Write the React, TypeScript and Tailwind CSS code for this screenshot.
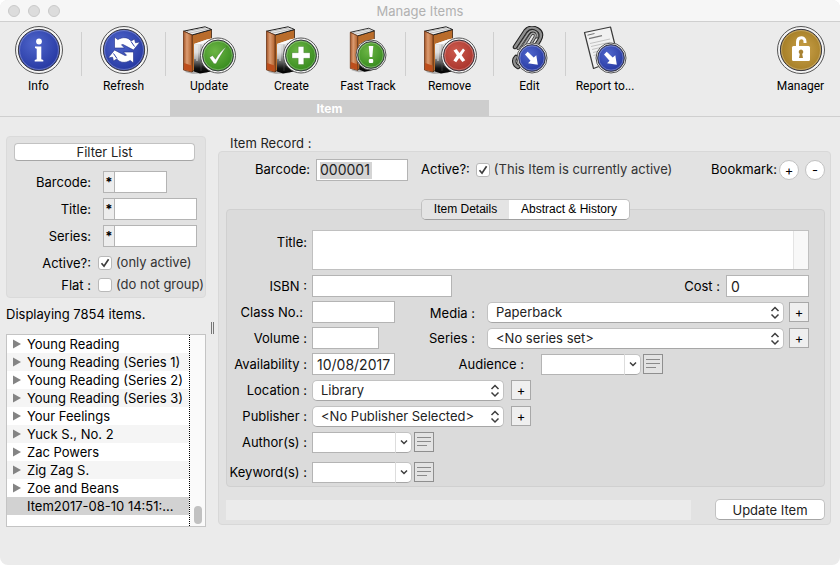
import React, { useState } from "react";

const field = "h-[22px] border border-[#b4b4b4] bg-white px-1 text-sm text-[#222] outline-none";
const label = "shrink-0 text-right text-[13px] whitespace-nowrap";

function Rings({ cx, cy, r, fill }: { cx: number; cy: number; r: number; fill: string }) {
  return (
    <>
      <circle cx={cx} cy={cy} r={r - 0.5} fill="#f4f4f4" stroke="#555" strokeWidth="1" />
      <circle cx={cx} cy={cy} r={r * 0.86} fill={`url(#${fill})`} stroke="#3a3a44" strokeWidth="1" />
      <circle cx={cx} cy={cy} r={r * 0.86 - 1.2} fill="none" stroke="#fff" strokeOpacity=".28" strokeWidth="1" />
    </>
  );
}

function Gradients() {
  return (
    <svg width="0" height="0" className="absolute" aria-hidden="true">
      <defs>
        <radialGradient id="blue" cx=".4" cy=".35" r=".7">
          <stop offset="0" stopColor="#4f66cb" />
          <stop offset="1" stopColor="#2436a0" />
        </radialGradient>
        <radialGradient id="green" cx=".4" cy=".35" r=".7">
          <stop offset="0" stopColor="#6cb545" />
          <stop offset="1" stopColor="#34891c" />
        </radialGradient>
        <radialGradient id="red" cx=".4" cy=".35" r=".7">
          <stop offset="0" stopColor="#cb5a4e" />
          <stop offset="1" stopColor="#a8322a" />
        </radialGradient>
        <radialGradient id="gold" cx=".55" cy=".5" r=".6">
          <stop offset="0" stopColor="#c9a14a" />
          <stop offset="1" stopColor="#a17a22" />
        </radialGradient>
        <linearGradient id="spine" x1="0" x2="1" y1="0" y2="0">
          <stop offset="0" stopColor="#a35426" />
          <stop offset=".4" stopColor="#dc9c72" />
          <stop offset="1" stopColor="#b0602a" />
        </linearGradient>
        <linearGradient id="pages" x1="0" x2="0" y1="0" y2="1">
          <stop offset="0" stopColor="#f0f0f0" />
          <stop offset=".4" stopColor="#cfcfcf" />
          <stop offset=".65" stopColor="#6c6c6c" />
          <stop offset=".85" stopColor="#141414" />
          <stop offset="1" stopColor="#000" />
        </linearGradient>
      </defs>
    </svg>
  );
}

function Books() {
  return (
    <g strokeLinejoin="round">
      <path d="M3 46l8 2 14-1 6-8V14z" fill="#000" opacity=".25" />
      <path d="M10 9l19.500-5.500V30L10 46z" fill="#b96c2b" stroke="#3a2110" strokeWidth=".8" />
      <path d="M1.500 5.200L23 .8l6.500 2.700L10 9z" fill="#efefef" stroke="#1d1d1d" strokeWidth="1" />
      <path d="M4 5.800l20-4M7 7.200L27 2.800" stroke="#a9a9a9" strokeWidth=".7" />
      <path d="M1.500 5.200L10 9v37l-8.500-2z" fill="url(#spine)" stroke="#6b3517" strokeWidth=".8" />
      <path d="M2 37l7.500 2.500v6L2 43.500z" fill="#bd4e1c" />
      <path d="M12 18l13-4.500 7-1.500v33l-14 2.500-6-2z" fill="url(#pages)" />
      <path d="M12 18l13-4.500 7-1.500-12 6z" fill="#fafafa" />
      <path d="M13 19v14M15 19v16" stroke="#f8f8f8" strokeOpacity=".8" strokeWidth="1" />
      <path d="M19 18.500V45M23 17v10" stroke="#6a6a6a" strokeOpacity=".5" strokeWidth=".8" />
    </g>
  );
}

function BookIcon({ kind }: { kind: "check" | "plus" | "cross" }) {
  return (
    <svg width="54" height="48" viewBox="0 0 54 48" aria-hidden="true">
      <Books />
      <Rings cx={36} cy={29.5} r={18} fill={kind === "cross" ? "red" : "green"} />
      {kind === "check" && (
        <path d="M27.500 31.500l3-2 3 3.800C36.500 28 40 24 44.500 20.800c-4 5-7 10.500-10.500 17l-2-.1z" fill="#fff" stroke="#245f12" strokeOpacity=".5" strokeWidth=".6" />
      )}
      {kind === "plus" && (
        <path d="M33.200 20.500h5.600v6.200H45v5.600h-6.200v6.200h-5.600v-6.200H27v-5.600h6.200z" fill="#fff" stroke="#245f12" strokeOpacity=".5" strokeWidth=".6" />
      )}
      {kind === "cross" && (
        <path d="M30.500 24.500l3-1.500 3 4 3.500-4.500 2 1.800-3.300 5 3.500 5-2.800 1.700-3.200-4-3 4.200-2.800-1.700 3.400-5.200z" fill="#fff" />
      )}
    </svg>
  );
}

function ArrowBadge({ cx, cy }: { cx: number; cy: number }) {
  return (
    <>
      <Rings cx={cx} cy={cy} r={15.5} fill="blue" />
      <path
        transform={`translate(${cx} ${cy})`}
        d="M-7-3.500L-4.300-6.200 1.700-.5 4.300-2.800 5.800 6.800-4 5.300-1.500 2.700z"
        fill="#fff"
      />
    </>
  );
}

const clip = "M3 21L13.500 5C17 .8 22 1.200 25.500 3.500s4.500 6 2 10.500L18 29M4 31c-3 3-2 8 2 10";
const innerClip = "M9 24L18.500 9c2-3 6-2 4.500 2L14 26M6 22.500L16 7.500c3-4.500 11-3 9 3.500";

const refreshArrow = "M14.500 11l3.300 2.600c5-3 10.200-2.500 13.400 1.400l3.300-2 1 3.800 4.500-.8-6.500 8-9-4.700c-1-.8-2-1-3-.5l3 3.200h-10z";

const icons: Record<string, React.ReactNode> = {
  Info: (
    <svg width="48" height="48" viewBox="0 0 48 48" aria-hidden="true">
      <Rings cx={24} cy={24} r={24} fill="blue" />
      <circle cx="24" cy="15.500" r="2.900" fill="#fff" />
      <path d="M20 20.500h6.300v12.700l2 .8v1.600h-8.600V34l2-.8V22.800l-1.700-.7z" fill="#fff" />
    </svg>
  ),
  Refresh: (
    <svg width="48" height="48" viewBox="0 0 48 48" aria-hidden="true">
      <Rings cx={24} cy={24} r={24} fill="blue" />
      <g fill="#fff" stroke="#1c2b86" strokeWidth=".6">
        <path d={refreshArrow} />
        <path d={refreshArrow} transform="rotate(180 24 24)" />
      </g>
      <path d="M31 15.500l3.500 5M17 32.500l-3.500-5" stroke="#2d40a8" strokeWidth="1" />
    </svg>
  ),
  Update: <BookIcon kind="check" />,
  Create: <BookIcon kind="plus" />,
  "Fast Track": (
    <svg width="38" height="48" viewBox="0 0 38 48" aria-hidden="true">
      <g transform="translate(0 1.500) scale(.86 .93)">
        <Books />
      </g>
      <Rings cx={22} cy={29} r={15.5} fill="green" />
      <path d="M19.700 20h4.600l-1 11h-2.600z" fill="#fff" />
      <rect x="19.800" y="33" width="4.400" height="4" rx="1" fill="#fff" />
    </svg>
  ),
  Remove: <BookIcon kind="cross" />,
  Edit: (
    <svg width="36" height="48" viewBox="0 0 36 48" aria-hidden="true">
      <g fill="none" strokeLinecap="round">
        <path d={clip} stroke="#1f1f1f" strokeWidth="4.500" />
        <path d={innerClip} stroke="#2b2b2b" strokeWidth="3" />
        <path d={clip} stroke="#8f8f8f" strokeWidth="2.400" />
        <path d={innerClip} stroke="#a5a5a5" strokeWidth="1.500" />
      </g>
      <ArrowBadge cx={20} cy={32} />
    </svg>
  ),
  "Report to...": (
    <svg width="44" height="48" viewBox="0 0 44 48" aria-hidden="true">
      <path d="M1.500 6.500L27.500 1l8 32L10.500 42.500z" fill="#f1f1f1" stroke="#3a3a3a" strokeWidth="1.200" strokeLinejoin="round" />
      <path d="M4.500 9.200l7-1.700" stroke="#777" strokeWidth="1" />
      <path d="M6 12.700l13-3" stroke="#777" strokeWidth="1.200" />
      <path d="M7 17.500l20-4.500M8 20.500l19-4.300M9 23.500l14-3.300M10 26.500l8-2M10.500 29.500l5-1.300" stroke="#bcbcbc" strokeWidth=".9" />
      <ArrowBadge cx={28} cy={32} />
    </svg>
  ),
  Manager: (
    <svg width="48" height="48" viewBox="0 0 48 48" aria-hidden="true">
      <Rings cx={24} cy={24} r={24} fill="gold" />
      <path d="M20.500 21v-5c0-5.500 7.500-5.500 7.500-.5V17" fill="none" stroke="#fff" strokeWidth="3" />
      <rect x="15" y="20" width="18" height="15" rx="1.500" fill="#fff" />
      <path d="M24 23.500a2.400 2.400 0 0 1 1.200 4.400l.8 4.100h-4l.8-4.100a2.400 2.400 0 0 1 1.200-4.400z" fill="#a88233" />
    </svg>
  ),
};

function Tool({ name, width }: { name: string; width: string }) {
  return (
    <button className={`flex shrink-0 flex-col items-center gap-1 pt-1 ${width}`}>
      {icons[name]}
      <span className="text-xs leading-4 whitespace-nowrap">{name}</span>
    </button>
  );
}

function Separator() {
  return <div className="mx-1 mt-2.5 h-11 w-px shrink-0 bg-[#cfcfcf]" />;
}

function Check({ id, defaultChecked = false }: { id: string; defaultChecked?: boolean }) {
  return (
    <span className="relative flex h-3.5 w-3.5 shrink-0">
      <input
        id={id}
        type="checkbox"
        defaultChecked={defaultChecked}
        className="peer h-3.5 w-3.5 appearance-none rounded-[3px] border border-[#b9b9b9] bg-white"
      />
      <svg viewBox="0 0 14 14" className="pointer-events-none absolute inset-0 hidden peer-checked:block" aria-hidden="true">
        <path d="M3.500 7.300L6 10.200l4.600-7" fill="none" stroke="#3c3c3c" strokeWidth="1.700" />
      </svg>
    </span>
  );
}

function FilterField({ name, width }: { name: string; width: string }) {
  const id = `filter-${name}`;
  return (
    <div className="flex h-[22px] items-center">
      <label htmlFor={id} className={`${label} mr-3 w-[84px] pt-0.5`}>{name}:</label>
      <button className="h-full w-3 shrink-0 border border-[#b4b4b4] bg-[#ededed] text-[13px] leading-5 font-bold" aria-label={`${name} wildcard`}>*</button>
      <input id={id} className={`${field} -ml-px ${width}`} />
    </div>
  );
}

function Pop({ id, value, width }: { id: string; value: string; width: string }) {
  return (
    <span className={`relative flex h-[21px] ${width}`}>
      <select id={id} className="h-full w-full appearance-none rounded-[5px] border border-[#c2c2c2] border-b-[#a6a6a6] bg-white pl-2 text-[13px] text-[#222]">
        <option>{value}</option>
      </select>
      <svg width="10" height="14" viewBox="0 0 10 14" className="pointer-events-none absolute top-1 right-1" aria-hidden="true">
        <path d="M1.500 5L5 1.500 8.500 5M1.500 8.500L5 12l3.500-3.500" fill="none" stroke="#3d3d3d" strokeWidth="1.500" />
      </svg>
    </span>
  );
}

function Plus({ name }: { name: string }) {
  return (
    <button aria-label={name} className="h-5 w-5 shrink-0 border border-[#a8a8a8] bg-[#efefef] text-[13px] leading-4">
      +
    </button>
  );
}

function Combo({ id }: { id: string }) {
  return (
    <span className="flex items-center">
      <input id={id} className="h-[21px] w-[83px] border border-r-0 border-[#b4b4b4] bg-white px-1 text-[13px] outline-none" />
      <button aria-label="Show choices" className="flex h-[21px] w-[17px] items-center justify-center rounded-r-[5px] border border-[#c2c2c2] border-b-[#a6a6a6] border-l-[#ddd] bg-white">
        <svg width="8" height="6" viewBox="0 0 8 6" aria-hidden="true">
          <path d="M1 1.500l3 3 3-3" fill="none" stroke="#3d3d3d" strokeWidth="1.500" />
        </svg>
      </button>
      <button aria-label="Open list" className="ml-0.5 h-5 w-5 border border-[#8f8f8f] bg-[#e3e3e3]">
        <svg width="18" height="18" viewBox="0 0 18 18" aria-hidden="true">
          <path d="M2 4.500h14M2 8.500h14M2 12.500h10" stroke="#8a8a8a" strokeWidth="1" />
        </svg>
      </button>
    </span>
  );
}

function Row({ name, id, tight = false, children }: { name: string; id: string; tight?: boolean; children: React.ReactNode }) {
  return (
    <div className="flex h-[26px] items-center">
      <label htmlFor={id} className={`${label} mr-[5px] w-[80px] pt-0.5 ${tight ? "pr-1" : ""}`}>{name}</label>
      {children}
    </div>
  );
}

const titles = [
  "Young Reading",
  "Young Reading (Series 1)",
  "Young Reading (Series 2)",
  "Young Reading (Series 3)",
  "Your Feelings",
  "Yuck S., No. 2",
  "Zac Powers",
  "Zig Zag S.",
  "Zoe and Beans",
];

function Sidebar() {
  return (
    <aside className="w-[200px] shrink-0 pt-[19px]">
      <div className="rounded border border-[#dadada] bg-[#e2e2e2] pt-1.5 pr-[10px] pb-px pl-[7px]">
        <button className="block h-[18px] w-full rounded border border-[#c2c2c2] border-b-[#a6a6a6] bg-white text-[13px] leading-4 text-[#222]">
          Filter List
        </button>
        <div className="-ml-[7px] mt-2.5 flex flex-col gap-[5px]">
          <FilterField name="Barcode" width="w-[53px]" />
          <FilterField name="Title" width="w-[83px]" />
          <FilterField name="Series" width="w-[83px]" />
        </div>
        <div className="-mx-[7px] mt-[5px] flex flex-col">
          <div className="flex h-[22px] items-center">
            <span className={`${label} mr-[7px] w-[84px] pt-0.5`}>Active?:</span>
            <Check id="only-active" defaultChecked />
            <label htmlFor="only-active" className="ml-1 text-[13px] whitespace-nowrap text-[#333]">(only active)</label>
          </div>
          <div className="flex h-[22px] items-center">
            <span className={`${label} mr-[7px] w-[84px] pt-0.5`}>Flat :</span>
            <Check id="no-group" />
            <label htmlFor="no-group" className="ml-1 text-[13px] whitespace-nowrap text-[#333]">(do not group)</label>
          </div>
        </div>
      </div>
      <p className="mt-1.5 text-[13px] leading-5">Displaying 7854 items.</p>
      <div className="mt-2.5 flex h-[193px] border border-[#c4c4c4] bg-white">
        <ul className="min-w-0 flex-1 border-r border-dotted border-black text-[13px] leading-[18px]">
          {titles.map((t, i) => (
            <li key={t} className={`flex items-center pl-1.5 ${i % 2 ? "bg-[#f5f5f5]" : ""}`}>
              <svg width="8" height="10" viewBox="0 0 8 10" className="mr-1.5 shrink-0" aria-hidden="true">
                <path d="M0 .5l8 4.500-8 4.500z" fill="#848484" />
              </svg>
              <span className="whitespace-nowrap">{t}</span>
            </li>
          ))}
          <li className="bg-[#d2d2d2] pl-5 whitespace-nowrap">Item2017-08-10 14:51:...</li>
        </ul>
        <div className="flex w-[15px] items-end justify-center bg-[#fafafa] pb-0.5">
          <div className="h-[18px] w-2 rounded-full bg-[#c1c1c1]" />
        </div>
      </div>
    </aside>
  );
}

function Record() {
  const [tab, setTab] = useState(0);
  const tabs = ["Item Details", "Abstract & History"];
  return (
    <main className="min-w-0 flex-1 pt-[18px]">
      <h2 className="ml-3 h-4 text-[13px] leading-4 text-[#222]">Item Record :</h2>
      <div className="rounded border border-[#d8d8d8] bg-[#e2e2e2] pt-[7px] pr-[5px] pb-1 pl-[7px]">
        <div className="flex h-[22px] items-center">
          <label htmlFor="barcode" className={`${label} mr-1.5 w-[84px]`}>Barcode:</label>
          <span className="flex h-[22px] w-[92px] shrink-0 items-center border border-[#b4b4b4] bg-white px-[3px]">
            <input id="barcode" defaultValue="000001" className="h-[17px] w-[52px] bg-[#d4d4d4] text-sm text-[#222] outline-none" />
          </span>
          <span className={`${label} mr-1.5 ml-[13px]`}>Active?:</span>
          <Check id="active" defaultChecked />
          <label htmlFor="active" className="ml-1 text-[13px] whitespace-nowrap text-[#333]">(This Item is currently active)</label>
          <span className="ml-auto text-[13px]">Bookmark:</span>
          <button aria-label="Add bookmark" className="ml-0.5 h-5 w-5 rounded-full border border-[#c2c2c2] bg-white text-[13px] leading-4">+</button>
          <button aria-label="Remove bookmark" className="ml-1.5 h-5 w-5 rounded-full border border-[#c2c2c2] bg-white text-[13px] leading-4">-</button>
        </div>
        <div className="mt-7 rounded border border-[#d0d0d0] bg-[#dbdbdb] pr-[15px] pb-px">
          <div role="tablist" className="-mt-[11px] mb-2.5 ml-[194px] flex h-[21px] w-[209px] overflow-hidden rounded-[5px] border border-[#c0c0c0] border-b-[#a0a0a0] font-['Liberation_Sans',sans-serif] text-xs">
            {tabs.map((t, i) => (
              <button
                key={t}
                role="tab"
                aria-selected={tab === i}
                onClick={() => setTab(i)}
                className={`pb-0.5 ${i ? "flex-1" : "w-[87px]"} ${tab === i ? "bg-[#e4e4e4]" : "bg-white"}`}
              >
                {t}
              </button>
            ))}
          </div>
          <div className="mb-[3px] flex">
            <label htmlFor="title" className={`${label} mr-[5px] w-[80px] pt-[3px]`}>Title:</label>
            <div className="flex h-10 flex-1 border border-[#c0c0c0]">
              <textarea id="title" className="h-full flex-1 resize-none bg-white px-1 text-sm outline-none" />
              <div className="w-[15px] border-l border-[#e4e4e4] bg-[#f8f8f8]" />
            </div>
          </div>
          <Row name="ISBN :" id="isbn">
            <input id="isbn" className={`${field} w-[140px]`} />
            <label htmlFor="cost" className={`${label} mr-1.5 ml-auto pt-0.5`}>Cost :</label>
            <input id="cost" defaultValue="0" className={`${field} w-[83px]`} />
          </Row>
          <Row name="Class No.:" id="class-no" tight>
            <input id="class-no" className={`${field} w-[83px]`} />
            <label htmlFor="media" className={`${label} mr-3 w-[80px] pt-1`}>Media :</label>
            <Pop id="media" value="Paperback" width="flex-1 mr-[5px]" />
            <Plus name="Add media" />
          </Row>
          <Row name="Volume :" id="volume">
            <input id="volume" className={`${field} mr-4 w-[67px]`} />
            <label htmlFor="series" className={`${label} mr-3 w-[80px] pt-0.5`}>Series :</label>
            <Pop id="series" value="<No series set>" width="flex-1 mr-[5px]" />
            <Plus name="Add series" />
          </Row>
          <Row name="Availability :" id="availability">
            <input id="availability" defaultValue="10/08/2017" className={`${field} w-[83px]`} />
            <label htmlFor="audience" className={`${label} mr-[17px] w-[129px] pt-0.5`}>Audience :</label>
            <Combo id="audience" />
          </Row>
          <Row name="Location :" id="location">
            <Pop id="location" value="Library" width="w-[192px] mr-[7px]" />
            <Plus name="Add location" />
          </Row>
          <Row name="Publisher :" id="publisher">
            <Pop id="publisher" value="<No Publisher Selected>" width="w-[192px] mr-[7px]" />
            <Plus name="Add publisher" />
          </Row>
          <Row name="Author(s) :" id="authors">
            <Combo id="authors" />
          </Row>
          <div className="pt-1">
            <Row name="Keyword(s) :" id="keywords">
              <Combo id="keywords" />
            </Row>
          </div>
        </div>
        <div className="mt-3 flex items-center gap-6">
          <div className="h-5 flex-1 bg-[#ebebeb]" />
          <button className="h-[21px] w-[110px] rounded-[5px] border border-[#c2c2c2] border-b-[#a6a6a6] bg-white text-[13px] leading-[18px] text-[#222]">
            Update Item
          </button>
        </div>
      </div>
    </main>
  );
}

export default function App() {
  return (
    <div className="flex min-h-screen flex-col overflow-hidden rounded-lg bg-[#ebebeb] font-[Inter,sans-serif] text-black">
      <Gradients />
      <header className="flex h-[22px] items-center border-b border-[#cfcfcf] bg-[#f6f6f6] px-2">
        <div className="flex flex-1 gap-2">
          <span className="h-3 w-3 rounded-full border border-[#c9c9c9] bg-[#dcdcdc]" />
          <span className="h-3 w-3 rounded-full border border-[#c9c9c9] bg-[#dcdcdc]" />
          <span className="h-3 w-3 rounded-full border border-[#c9c9c9] bg-[#dcdcdc]" />
        </div>
        <h1 className="pt-0.5 text-[13px] text-[#b1b1b1]">Manage Items</h1>
        <div className="flex-1" />
      </header>
      <nav className="flex h-[95px] border-b border-[#cfcfcf] font-[Roboto,sans-serif]">
        <Tool name="Info" width="w-[77px]" />
        <Separator />
        <Tool name="Refresh" width="w-[75px]" />
        <Separator />
        <div className="flex flex-col justify-between">
          <div className="flex">
            <Tool name="Update" width="w-[78px]" />
            <Tool name="Create" width="w-[87px]" />
            <Tool name="Fast Track" width="w-[66px]" />
            <Separator />
            <Tool name="Remove" width="w-[79px]" />
          </div>
          <div className="h-4 bg-[#cdcdcd] text-center font-[Inter,sans-serif] text-xs leading-[18px] font-bold text-white">Item</div>
        </div>
        <Separator />
        <Tool name="Edit" width="w-[63px]" />
        <Separator />
        <Tool name="Report to..." width="w-[70px]" />
        <div className="flex-1" />
        <Tool name="Manager" width="w-[79px]" />
      </nav>
      <div className="flex px-1.5 pr-[9px] pb-8">
        <Sidebar />
        <div className="flex w-3 shrink-0 justify-center gap-px pt-[205px]">
          <span className="h-3 w-px bg-[#777]" />
          <span className="h-3 w-px bg-[#777]" />
        </div>
        <Record />
      </div>
    </div>
  );
}
